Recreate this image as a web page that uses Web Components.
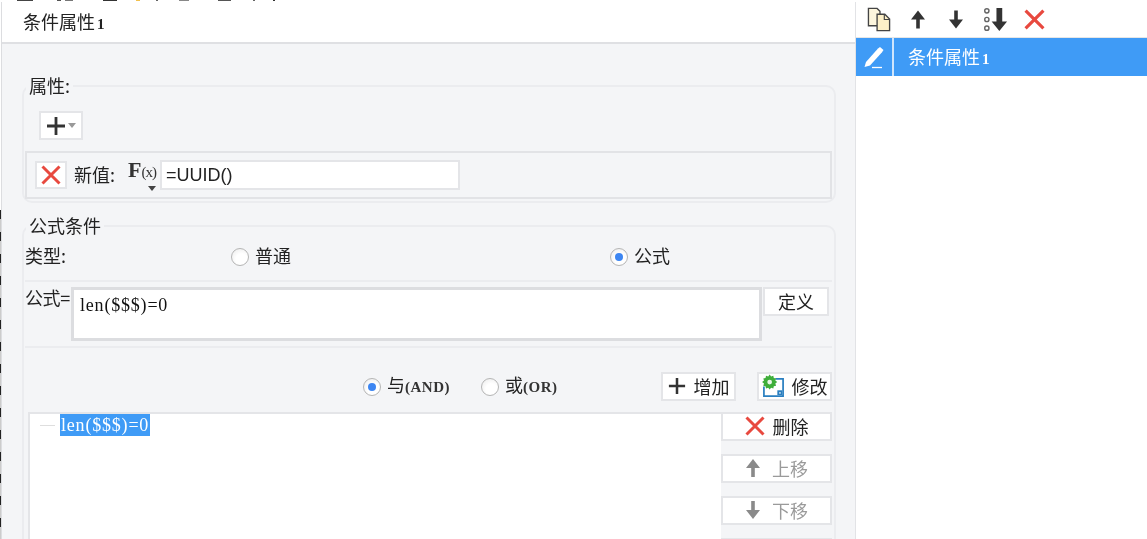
<!DOCTYPE html>
<html lang="zh">
<head>
<meta charset="utf-8">
<title>条件属性</title>
<style>
  html, body { margin: 0; height: 100%; overflow: hidden; background: #fff; }
  body { font: 18px "Noto Sans CJK SC", "Liberation Sans", sans-serif; color: #222; }
</style>
</head>
<body>
<template id="icons">
  <svg data-i="plus" viewBox="0 0 20 20"><path d="M10 1v18M1 10h18" fill="none" stroke="#333" stroke-width="2.8"/></svg>
  <svg data-i="cross" viewBox="0 0 20 20"><path d="M1.500 1.500l17 17M18.500 1.500l-17 17" fill="none" stroke="#e8493f" stroke-width="3"/></svg>
  <svg data-i="up" viewBox="0 0 16 20"><path d="M8 1L1 10h5.200v9h3.600v-9H15z" fill="currentColor"/></svg>
  <svg data-i="down" viewBox="0 0 16 20"><path d="M8 19L1 10h5.200V1h3.600v9H15z" fill="currentColor"/></svg>
  <svg data-i="copy" viewBox="0 0 26 26"><path d="M1.500 1.500h9l3 3v15h-12z" fill="#fdf6dd" stroke="#444" stroke-width="1.400"/><path d="M10.500 7.500h8l5 5v12h-13z" fill="#fdf0c8" stroke="#444" stroke-width="1.400"/><path d="M18 8v5h5" fill="none" stroke="#444" stroke-width="1.200"/></svg>
  <svg data-i="bottom" viewBox="0 0 26 26"><g fill="none" stroke="#666" stroke-width="1.500"><circle cx="4" cy="4" r="2.200"/><circle cx="4" cy="13" r="2.200"/><circle cx="4" cy="22" r="2.200"/></g><path d="M17 25L9 15h5V1h6v14h5z" fill="#333"/></svg>
  <svg data-i="pen" viewBox="0 0 24 24"><path d="M4 17L16 3.500l2-1.500 3.500 3-1.500 2.200L8 20.500 2.500 22z" fill="#fff"/><path d="M10 22.500h10" stroke="#fff" stroke-width="1.300"/></svg>
  <svg data-i="edit" viewBox="0 0 24 24"><path d="M14 5h8v18H2v-10" fill="none" stroke="#2a7fc0" stroke-width="1.800"/><rect x="16" y="17" width="5" height="5" fill="#2a7fc0"/><rect x="18" y="19" width="1.500" height="1.500" fill="#fff"/><path d="M8 .5l1.500 2 2.300-.8.500 2.400 2.400.5-.8 2.300 2 1.500-2 1.500.8 2.300-2.400.5-.5 2.400-2.300-.8-1.500 2-1.500-2-2.300.8-.5-2.400-2.400-.5.800-2.300-2-1.500 2-1.500-.8-2.300 2.400-.5.500-2.400 2.300.8z" fill="#3fae3a"/><circle cx="8" cy="8.400" r="2.500" fill="#eaf6e8"/></svg>
</template>

<cond-page>
  <cond-strip slot="strip"></cond-strip>
  <cond-dialog slot="main"></cond-dialog>
  <cond-side slot="side"></cond-side>
</cond-page>

<script>
"use strict";

////////////////////////////////////////////
// Helpers
const CJK = `"Noto Sans CJK SC", "Liberation Sans", sans-serif`;
const SERIF = `"Liberation Serif", "Noto Sans CJK SC", serif`;
// width, colour of the bits of the window behind, showing above the dialog
const STRIP_BITS = [[16,"#fff"],[16,"#444"],[24,"#fff"],[4,"#555"],[4,"#fff"],[8,"#777"],[30,"#fff"],[14,"#333"],[19,"#fff"],[4,"#f2c14e"],[16,"#fff"],[2,"#666"],[21,"#fff"],[10,"#888"],[29,"#fff"],[13,"#555"],[22,"#fff"],[2,"#666"],[18,"#fff"],[2,"#333"]];

function shadow(el, html) {
  const root = el.attachShadow({ mode: "open" });
  root.innerHTML = html;
  return root;
}

////////////////////////////////////////////
// Icon
class CondIcon extends HTMLElement {
  connectedCallback() {
    const size = this.getAttribute("size") ?? 20;
    const height = this.getAttribute("h") ?? size;
    const root = shadow(this, `<style>
      :host { display: inline-flex; width: ${size}px; height: ${height}px; flex: none; color: ${this.getAttribute("color") ?? "#333"}; }
      svg { width: 100%; height: 100%; display: block; }
    </style>`);
    const tpl = document.getElementById("icons");
    const icon = tpl.content.querySelector(`[data-i="${this.getAttribute("name")}"]`);
    root.appendChild(icon.cloneNode(true));
  }
}

////////////////////////////////////////////
// Button with a light border
class CondBtn extends HTMLElement {
  constructor() {
    super();
    shadow(this, `<style>
      :host { display: flex; box-sizing: border-box; align-items: center; justify-content: center; gap: 8px; padding-bottom: 2px;
        background: #fff; border: 2px solid #e4e5e8; font-size: 18px; line-height: 1; color: #222; flex: none; }
      :host([disabled]) { color: #9a9a9a; }
    </style><slot></slot>`);
  }
}

////////////////////////////////////////////
// Radio
class CondRadio extends HTMLElement {
  constructor() {
    super();
    shadow(this, `<style>
      :host { display: inline-flex; align-items: center; gap: 6px; font-size: 18px; line-height: 1; color: #222; }
      i { width: 18px; height: 18px; box-sizing: border-box; border-radius: 50%; border: 1px solid #b5b5b5;
        background: radial-gradient(circle at 60% 65%, #fff 40%, #e8e8e8 100%); display: flex; align-items: center; justify-content: center; }
      span { margin-top: -3px; }
      :host([checked]) i::after { content: ""; width: 8px; height: 8px; border-radius: 50%; background: #3d86f2; }
    </style><i></i><span><slot></slot></span>`);
  }
}

////////////////////////////////////////////
// Group box with a legend sitting on its border
class CondGroup extends HTMLElement {
  constructor() {
    super();
    shadow(this, `<style>
      :host { display: block; position: relative; box-sizing: border-box; border: 2px solid #ebecef; border-radius: 10px; }
      .legend { position: absolute; left: 2px; top: -13px; background: #f4f5f7; padding: 0 3px; font-size: 18px; line-height: 22px; color: #222; }
    </style><div class="legend"><slot name="legend"></slot></div><slot></slot>`);
  }
}

////////////////////////////////////////////
// Left dialog
class CondDialog extends HTMLElement {
  constructor() {
    super();
    shadow(this, `<style>
      :host { display: flex; flex-direction: column; height: 100%; box-sizing: border-box; background: #f4f5f7;
        border-left: 1px solid #dcdde0; font-family: ${CJK}; color: #222; overflow: hidden; }
      .title { height: 42px; flex: none; box-sizing: border-box; background: #fff; border-bottom: 2px solid #dfe0e3;
        padding-left: 21px; font-size: 18px; line-height: 39px; }
      .num { font-family: ${SERIF}; font-size: 15px; font-weight: bold; margin-left: 2px; }
      .body { flex: 1; display: flex; flex-direction: column; padding: 41px 19px 0 20px; }
      .g1 { height: 118px; flex: none; padding: 24px 2px 0 1px; }
      .add { width: 44px; height: 29px; margin-left: 14px; gap: 2px; padding-bottom: 0; }
      .caret { width: 0; height: 0; border: 4px solid transparent; border-top: 5px solid #999; border-bottom: 0; }
      .row { height: 48px; margin-top: 11px; box-sizing: border-box; border: 2px solid #e2e3e6; display: flex; align-items: center; padding: 0 0 0 8px; font-size: 18px; }
      .del { width: 32px; height: 28px; padding-bottom: 0; }
      .row .lab { margin: -3px 0 0 7px; width: 54px; flex: none; }
      .fx { width: 32px; height: 34px; flex: none; position: relative; font-family: ${SERIF}; font-weight: bold; font-size: 22px; line-height: 28px; color: #333; margin-top: -4px; }
      .fx small { font-size: 15px; letter-spacing: -1px; font-weight: normal; }
      .fx::after { content: ""; position: absolute; left: 20px; top: 30px; border: 4px solid transparent; border-top: 5px solid #444; border-bottom: 0; }
      .input { width: 300px; height: 30px; box-sizing: border-box; background: #fff; border: 2px solid #e4e5e8; font: 18px/26px "Liberation Sans", sans-serif; padding-left: 4px; color: #222; }
      .g2 { flex: 1; margin-top: 22px; margin-bottom: -20px; padding: 0 2px 0 1px; }
      .type { height: 27px; padding-bottom: 10px; margin-top: 16px; display: grid; grid-template-columns: 206px 379px auto; align-items: center; font-size: 18px; border-bottom: 2px solid #ebecef; }
      .type > span { margin-top: -3px; }
      .formula { display: grid; grid-template-columns: 46px 692px 66px; box-sizing: border-box; height: 66px; border-bottom: 2px solid #ebecef; padding-top: 5px; align-items: start; }
      .formula .lab { font-size: 18px; line-height: 20px; white-space: nowrap; letter-spacing: -.4px; }
      .area { height: 54px; width: 691px; box-sizing: border-box; background: #fff; border: 3px solid #dcdde0; font: 18px/24px ${SERIF}; letter-spacing: .8px; padding: 3px 6px; color: #111; }
      .def { height: 29px; }
      .logic { height: 53px; display: flex; align-items: center; padding-top: 24px; box-sizing: border-box; }
      .logic cond-radio { margin-left: 338px; }
      .logic cond-radio + cond-radio { margin-left: 31px; }
      .en { font: bold 15px ${SERIF}; color: #333; letter-spacing: .5px; }
      .logic .plus { width: 75px; height: 29px; margin-left: auto; }
      .logic .edit { width: 75px; height: 29px; margin-left: 21px; gap: 7px; }
      .list { display: grid; grid-template-columns: 693px 111px; margin-top: 11px; margin-left: 3px; }
      .tree { background: #fff; border: 2px solid #e4e5e8; border-right: 0; height: 200px; box-sizing: border-box; display: flex; align-items: flex-start; padding: 0 0 0 10px; }
      .tree i { width: 15px; height: 1px; background: #dedede; margin: 11px 5px 0 0; }
      .tree span { background: #3f9bf6; color: #fff; font: 18px/22px ${SERIF}; letter-spacing: .8px; padding: 0 1px 0 1px; }
      .side { display: flex; flex-direction: column; gap: 13px; }
      .side cond-btn { height: 29px; gap: 8px; }
      .side cond-btn[disabled] { gap: 11px; }
    </style>
    <div class="title">条件属性<span class="num">1</span></div>
    <div class="body">
      <cond-group class="g1">
        <span slot="legend">属性:</span>
        <cond-btn class="add"><cond-icon name="plus" size="20"></cond-icon><span class="caret"></span></cond-btn>
        <div class="row">
          <cond-btn class="del"><cond-icon name="cross" size="20"></cond-icon></cond-btn>
          <span class="lab">新值:</span>
          <div class="fx">F<small>(x)</small></div>
          <div class="input">=UUID()</div>
        </div>
      </cond-group>
      <cond-group class="g2">
        <span slot="legend">公式条件</span>
        <div class="type"><span>类型:</span><cond-radio>普通</cond-radio><cond-radio checked>公式</cond-radio></div>
        <div class="formula">
          <span class="lab">公式=</span>
          <div class="area">len($$$)=0</div>
          <cond-btn class="def">定义</cond-btn>
        </div>
        <div class="logic">
          <cond-radio checked>与<span class="en">(AND)</span></cond-radio>
          <cond-radio>或<span class="en">(OR)</span></cond-radio>
          <cond-btn class="plus"><cond-icon name="plus" size="18"></cond-icon>增加</cond-btn>
          <cond-btn class="edit"><cond-icon name="edit" size="23"></cond-icon>修改</cond-btn>
        </div>
        <div class="list">
          <div class="tree"><i></i><span>len($$$)=0</span></div>
          <div class="side">
            <cond-btn><cond-icon name="cross" size="20"></cond-icon>删除</cond-btn>
            <cond-btn disabled><cond-icon name="up" size="16" h="20" color="#8a8a8a"></cond-icon>上移</cond-btn>
            <cond-btn disabled><cond-icon name="down" size="16" h="20" color="#8a8a8a"></cond-icon>下移</cond-btn>
            <cond-btn></cond-btn>
          </div>
        </div>
      </cond-group>
    </div>`);
  }
}

////////////////////////////////////////////
// Right panel
class CondSide extends HTMLElement {
  constructor() {
    super();
    shadow(this, `<style>
      :host { display: flex; flex-direction: column; height: 100%; background: #fff; border-left: 1px solid #e2e3e6; box-sizing: border-box; font-family: ${CJK}; }
      .tools { height: 36px; flex: none; box-sizing: border-box; display: flex; align-items: center; padding: 0 0 0 11px; border-bottom: 1px solid #e6e6e6; }
      .copy { margin-right: 18px; }
      .up { margin-right: 22px; }
      .down { margin-right: 19px; }
      .bottom { margin-right: 16px; }
      .item { height: 38px; flex: none; background: #3f9bf6; color: #fff; display: flex; align-items: center; font-size: 18px; }
      .pen { width: 36px; height: 100%; display: flex; align-items: center; justify-content: center; border-right: 2px solid #cfe5fc; flex: none; }
      .text { margin-left: 14px; margin-top: -2px; }
      .num { font-family: ${SERIF}; font-size: 15px; font-weight: bold; margin-left: 2px; }
    </style>
    <div class="tools">
      <cond-icon class="copy" name="copy" size="25"></cond-icon>
      <cond-icon class="up" name="up" size="16" h="21" color="#333"></cond-icon>
      <cond-icon class="down" name="down" size="16" h="21" color="#333"></cond-icon>
      <cond-icon class="bottom" name="bottom" size="25"></cond-icon>
      <cond-icon name="cross" size="21"></cond-icon>
    </div>
    <div class="item"><div class="pen"><cond-icon name="pen" size="24"></cond-icon></div><span class="text">条件属性<span class="num">1</span></span></div>`);
  }
}

////////////////////////////////////////////
// Thin strip of the window behind the dialog
class CondStrip extends HTMLElement {
  constructor() {
    super();
    const bits = STRIP_BITS.map(([w, c]) => `<i style="width:${w}px;background:${c}"></i>`).join("");
    shadow(this, `<style>
      :host { display: flex; height: 2px; overflow: hidden; background: #fff; }
      i { display: block; flex: none; height: 1px; }
    </style>${bits}`);
  }
}

////////////////////////////////////////////
// Page: strip on top, then the two columns
class CondPage extends HTMLElement {
  constructor() {
    super();
    shadow(this, `<style>
      :host { display: grid; grid-template-columns: 854px 292px; grid-template-rows: 2px 537px; height: 539px; width: 1147px;
        box-sizing: border-box; padding-left: 1px; overflow: hidden; filter: blur(.4px);
        background: repeating-linear-gradient(#222 0 9px, #ccc 9px 22px) 0 210px / 1px 100% no-repeat; }
      ::slotted([slot="strip"]) { grid-column: 1 / -1; }
    </style><slot name="strip"></slot><slot name="main"></slot><slot name="side"></slot>`);
  }
}

////////////////////////////////////////////
// Executed Code
customElements.define("cond-icon", CondIcon);
customElements.define("cond-btn", CondBtn);
customElements.define("cond-radio", CondRadio);
customElements.define("cond-group", CondGroup);
customElements.define("cond-dialog", CondDialog);
customElements.define("cond-side", CondSide);
customElements.define("cond-strip", CondStrip);
customElements.define("cond-page", CondPage);
</script>
</body>
</html>
